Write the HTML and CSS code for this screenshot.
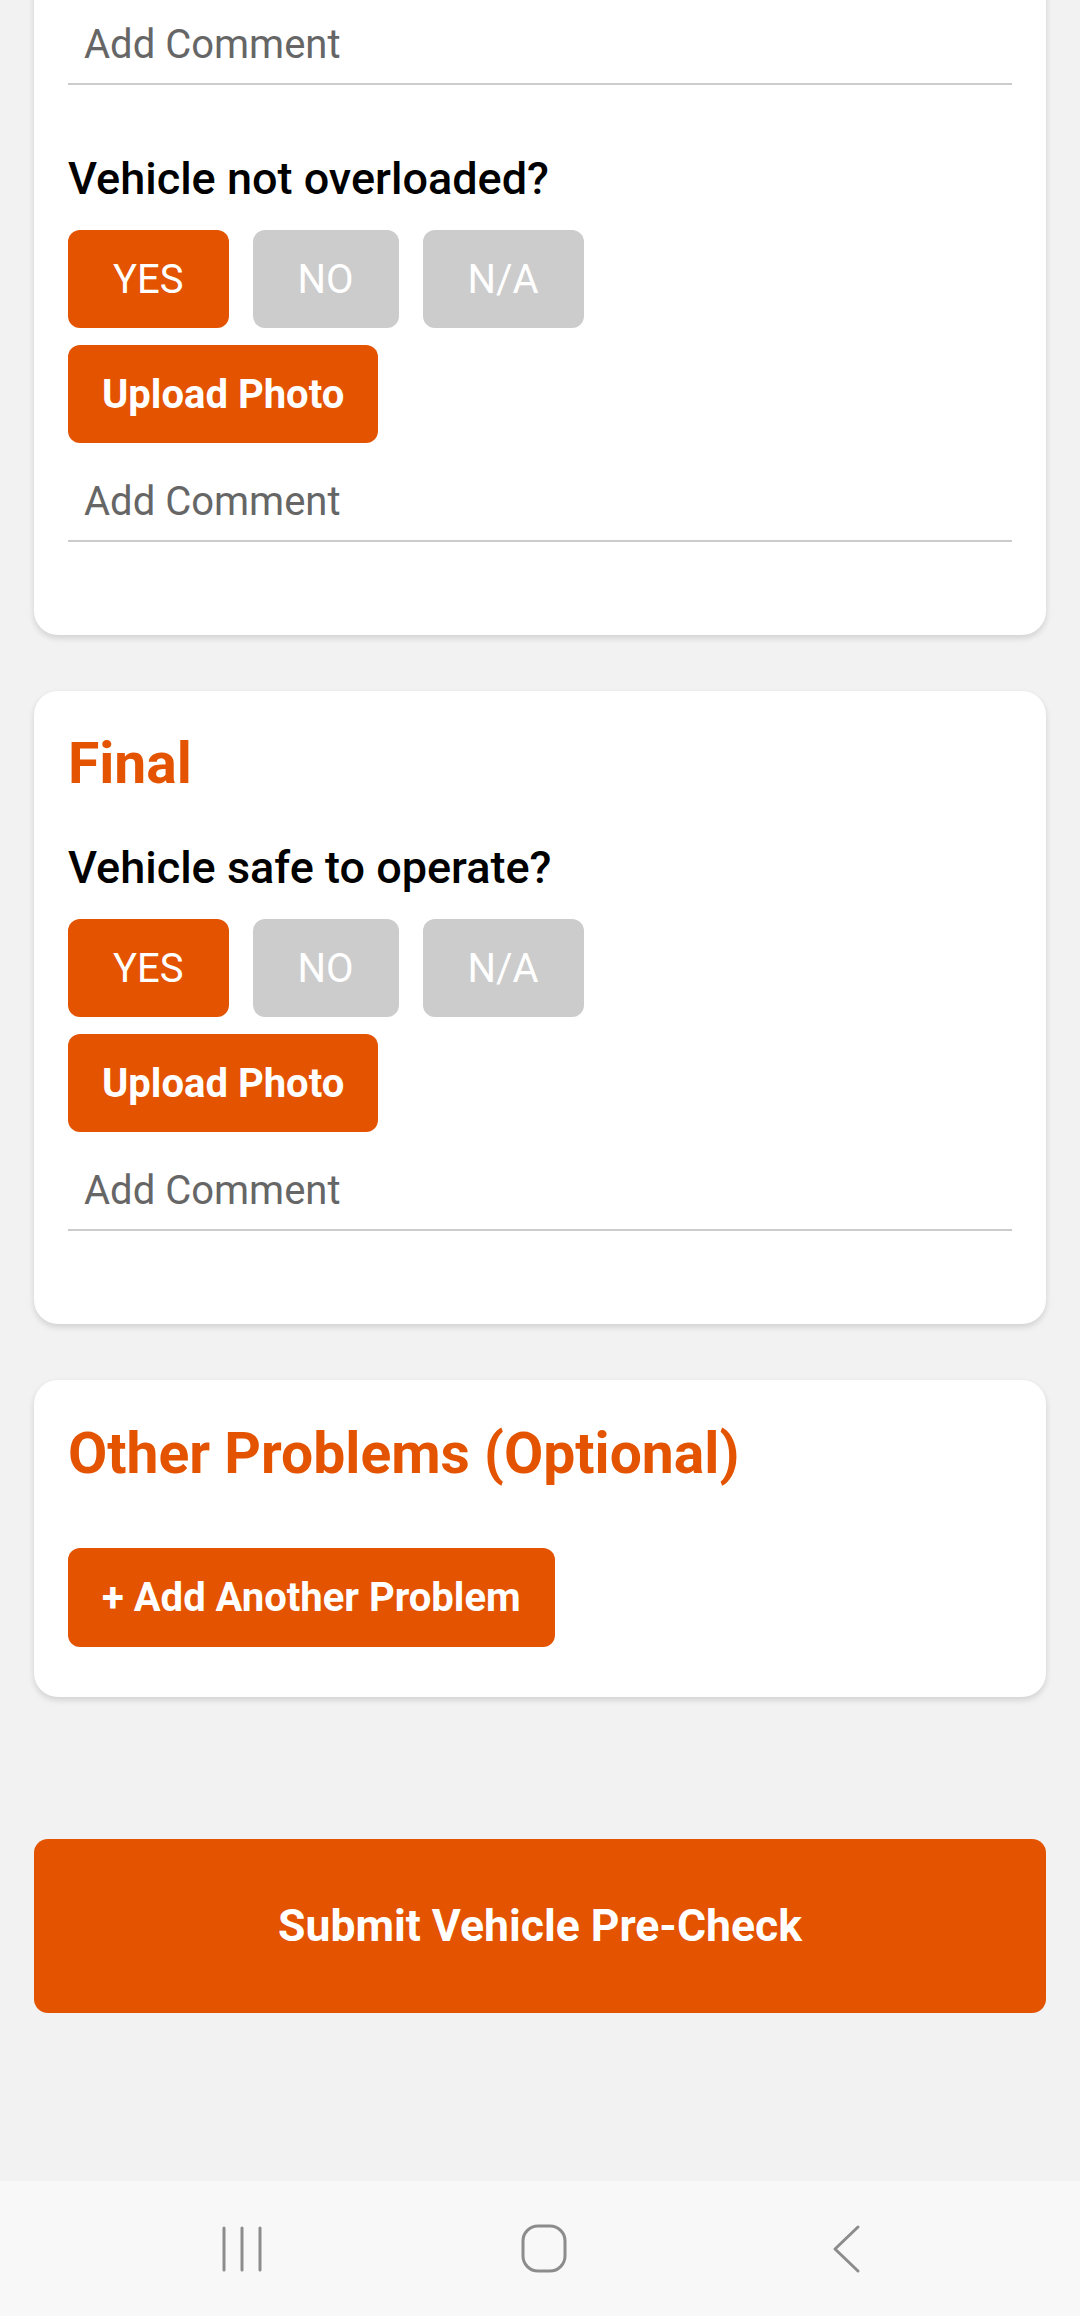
FILE: index.html
```html
<!DOCTYPE html>
<html lang="en">
<head>
<meta charset="utf-8">
<title>Vehicle Pre-Check</title>
<link rel="stylesheet" href="styles.css">
</head>
<body>
<div class="screen">
  <main class="content">
    <section class="card card--scrolled">
      <div class="item">
        <input class="comment" type="text" placeholder="Add Comment">
      </div>
      <div class="item">
        <p class="question">Vehicle not overloaded?</p>
        <div class="choices">
          <button class="choice choice--active">YES</button>
          <button class="choice">NO</button>
          <button class="choice">N/A</button>
        </div>
        <button class="btn btn--upload">Upload Photo</button>
        <input class="comment" type="text" placeholder="Add Comment">
      </div>
    </section>

    <section class="card">
      <h2 class="card-title">Final</h2>
      <div class="item">
        <p class="question">Vehicle safe to operate?</p>
        <div class="choices">
          <button class="choice choice--active">YES</button>
          <button class="choice">NO</button>
          <button class="choice">N/A</button>
        </div>
        <button class="btn btn--upload">Upload Photo</button>
        <input class="comment" type="text" placeholder="Add Comment">
      </div>
    </section>

    <section class="card card--other">
      <h2 class="card-title card-title--spaced">Other Problems (Optional)</h2>
      <button class="btn btn--add">+ Add Another Problem</button>
    </section>

    <button class="submit">Submit Vehicle Pre-Check</button>
  </main>

  <nav class="navbar">
    <div class="nav-slot">
      <svg class="nav-icon" width="44" height="48" viewBox="0 0 44 48">
        <path d="M4 3v42M22 3v42M40 3v42" stroke="#8c8c8c" stroke-width="3" stroke-linecap="round" fill="none"/>
      </svg>
    </div>
    <div class="nav-slot">
      <svg class="nav-icon" width="48" height="50" viewBox="0 0 48 50">
        <rect x="3" y="2" width="42" height="45" rx="15" ry="15" stroke="#8c8c8c" stroke-width="3" fill="none"/>
      </svg>
    </div>
    <div class="nav-slot">
      <svg class="nav-icon" width="32" height="50" viewBox="0 0 32 50">
        <path d="M28 3L5 25L28 47" stroke="#8c8c8c" stroke-width="3" stroke-linecap="round" stroke-linejoin="round" fill="none"/>
      </svg>
    </div>
  </nav>
</div>
</body>
</html>
```

FILE: styles.css
```css
* {
  box-sizing: border-box;
}

html, body {
  margin: 0;
  padding: 0;
}

body {
  background: #f2f2f2;
  font-family: Roboto, "Noto Sans", "Liberation Sans", sans-serif;
  width: 1080px;
  height: 2316px;
  overflow: hidden;
}

.screen {
  display: flex;
  flex-direction: column;
  height: 2316px;
}

.content {
  flex: 1;
  padding: 0 34px;
  overflow: hidden;
  display: flex;
  flex-direction: column;
  align-items: stretch;
}

.card {
  background: #ffffff;
  border-radius: 24px;
  padding: 39px 34px 93px;
  margin-bottom: 56px;
  box-shadow: 0 3px 6px rgba(0, 0, 0, 0.14);
  display: flex;
  flex-direction: column;
  align-items: flex-start;
}

.card--scrolled {
  margin-top: -53px;
}

.card--other {
  padding-top: 40px;
  padding-bottom: 50px;
}

.card-title {
  margin: 0 0 44px;
  font-weight: 700;
  font-size: 57px;
  line-height: 68px;
  color: #e35300;
}

.card-title--spaced {
  margin-bottom: 60px;
}

.item {
  width: 100%;
  display: flex;
  flex-direction: column;
  align-items: flex-start;
}

.item + .item {
  margin-top: 68px;
}

.question {
  margin: 0;
  font-weight: 500;
  font-size: 45px;
  line-height: 52px;
  color: #000000;
}

.choices {
  display: flex;
  gap: 24px;
  margin-top: 25px;
}

.choice {
  height: 98px;
  padding: 0 45px;
  border: none;
  border-radius: 12px;
  background: #cccccc;
  color: #ffffff;
  font-family: Roboto, "Noto Sans", sans-serif;
  font-weight: 400;
  font-size: 40px;
  display: flex;
  align-items: center;
  justify-content: center;
}

.choice--active {
  background: #e35300;
}

.btn {
  height: 98px;
  padding: 0 34px;
  border: none;
  border-radius: 12px;
  background: #e35300;
  color: #ffffff;
  font-family: Roboto, "Noto Sans", sans-serif;
  font-weight: 700;
  font-size: 40px;
  display: flex;
  align-items: center;
}

.btn--upload {
  margin-top: 17px;
}

.btn--add {
  height: 99px;
}

.comment {
  display: block;
  width: 100%;
  height: 79px;
  margin-top: 20px;
  padding: 0 16px;
  border: none;
  border-bottom: 2px solid #cccccc;
  background: transparent;
  font-family: Roboto, "Noto Sans", sans-serif;
  font-size: 40px;
  color: #333333;
  outline: none;
}

.comment::placeholder {
  color: #666666;
}

.submit {
  margin-top: 86px;
  height: 174px;
  width: 100%;
  border: none;
  border-radius: 14px;
  background: #e35300;
  color: #ffffff;
  font-family: Roboto, "Noto Sans", sans-serif;
  font-weight: 700;
  font-size: 44.5px;
  flex-shrink: 0;
}

.navbar {
  height: 135px;
  flex-shrink: 0;
  background: #f8f8f8;
  display: flex;
  justify-content: center;
  align-items: center;
  padding-left: 8px;
}

.nav-slot {
  width: 302px;
  display: flex;
  justify-content: center;
  align-items: center;
}

.nav-icon {
  display: block;
}
```
